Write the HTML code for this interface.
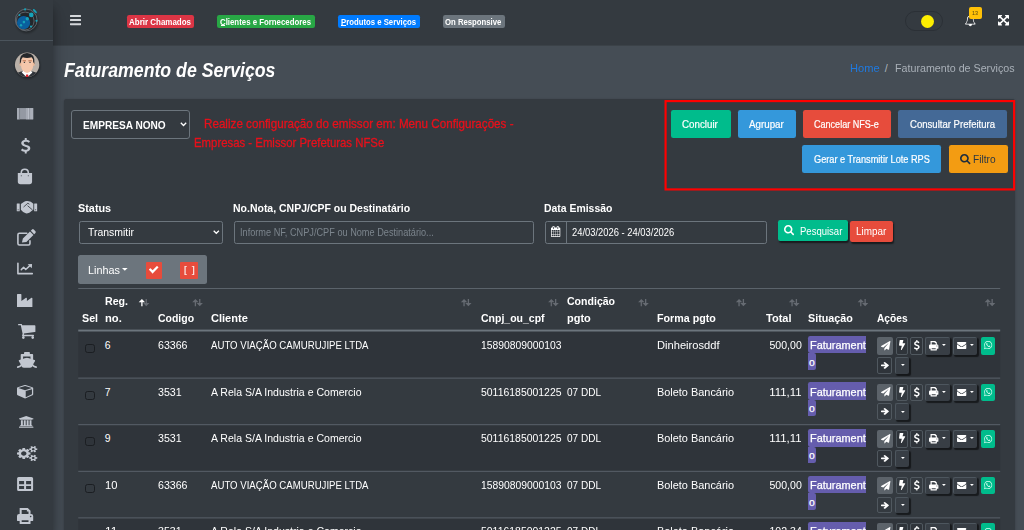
<!DOCTYPE html>
<html lang="pt-br"><head><meta charset="utf-8"><title>Faturamento de Serviços</title><style>
html,body{margin:0;padding:0}
body{width:1024px;height:530px;overflow:hidden;background:#454d55;font-family:"Liberation Sans",sans-serif;color:#fff;position:relative}
.t{position:absolute;white-space:pre;transform-origin:0 0}
.i{position:absolute;display:block;overflow:visible}
.b{position:absolute;box-sizing:border-box}
</style></head><body>
<span class="t" style="top:58.40px;font-size:19.6px;line-height:25.48px;left:63.52px;transform:scaleX(0.9032);font-weight:700;font-style:italic;">Faturamento de Serviços</span>
<span class="t" style="top:60.90px;font-size:10.8px;line-height:14.04px;left:850.21px;transform:scaleX(1.0266);color:#1f7ae0;">Home</span>
<span class="t" style="top:60.90px;font-size:10.8px;line-height:14.04px;left:884.86px;color:#adb5bd;">/</span>
<span class="t" style="top:60.90px;font-size:10.8px;line-height:14.04px;left:895.21px;transform:scaleX(0.9913);color:#a9b0b8;">Faturamento de Serviços</span>
<div class="b" style="left:53.00px;top:0.00px;width:971.00px;height:46.00px;background:#343a40;"></div>
<div class="b" style="left:53.00px;top:45.40px;width:971.00px;height:0.60px;background:#3b4248;"></div>
<svg class="i" style="left:70.00px;top:15.00px;" width="11.00" height="10.20" viewBox="0 0 1536 1280" preserveAspectRatio="none"><path fill="#d5d8db" d="M1536 1088V1216Q1536 1242 1517 1261Q1498 1280 1472 1280H64Q38 1280 19 1261Q0 1242 0 1216V1088Q0 1062 19 1043Q38 1024 64 1024H1472Q1498 1024 1517 1043Q1536 1062 1536 1088ZM1536 576V704Q1536 730 1517 749Q1498 768 1472 768H64Q38 768 19 749Q0 730 0 704V576Q0 550 19 531Q38 512 64 512H1472Q1498 512 1517 531Q1536 550 1536 576ZM1536 64V192Q1536 218 1517 237Q1498 256 1472 256H64Q38 256 19 237Q0 218 0 192V64Q0 38 19 19Q38 0 64 0H1472Q1498 0 1517 19Q1536 38 1536 64Z"/></svg>
<div class="b" style="left:126.75px;top:15.00px;width:67.50px;height:13.00px;background:#dc3545;border-radius:2.2px;"></div>
<span class="t" style="top:16.60px;font-size:8.3px;line-height:10.79px;left:129.34px;transform:scaleX(0.9610);font-weight:700;">Abrir Chamados</span>
<div class="b" style="left:217.00px;top:15.00px;width:97.50px;height:13.00px;background:#28a745;border-radius:2.2px;"></div>
<span class="t" style="top:16.60px;font-size:8.3px;line-height:10.79px;left:220.09px;transform:scaleX(0.9445);font-weight:700;">Clientes e Fornecedores</span>
<div class="b" style="left:337.50px;top:15.00px;width:82.00px;height:13.00px;background:#007bff;border-radius:2.2px;"></div>
<span class="t" style="top:16.60px;font-size:8.3px;line-height:10.79px;left:340.83px;transform:scaleX(0.9351);font-weight:700;">Produtos e Serviços</span>
<div class="b" style="left:443.00px;top:15.00px;width:62.00px;height:13.00px;background:#6c757d;border-radius:2.2px;"></div>
<span class="t" style="top:16.60px;font-size:8.3px;line-height:10.79px;left:445.33px;transform:scaleX(0.9325);font-weight:700;">On Responsive</span>
<div class="b" style="left:220.60px;top:25.40px;width:4.70px;height:0.70px;background:#fff;"></div>
<div class="b" style="left:341.30px;top:25.40px;width:4.60px;height:0.70px;background:#fff;"></div>
<div class="b" style="left:904.50px;top:10.60px;width:38.50px;height:20.00px;background:#343a40;border:1px solid #2b3036;border-radius:10px;"></div>
<div class="b" style="left:920.75px;top:14.70px;width:13.00px;height:13.00px;background:#fdee00;border-radius:7px;"></div>
<svg class="i" style="left:964.80px;top:15.00px;" width="10.60" height="11.20" viewBox="0 0 1664 1792" preserveAspectRatio="none"><path fill="#fff" d="M832 1680Q773 1680 730 1638Q688 1595 688 1536Q688 1520 672 1520Q656 1520 656 1536Q656 1609 708 1660Q759 1712 832 1712Q848 1712 848 1696Q848 1680 832 1680ZM182 1408H1482Q1216 1108 1216 576Q1216 525 1192 471Q1168 417 1123 368Q1078 319 1002 288Q925 256 832 256Q739 256 662 288Q586 319 541 368Q496 417 472 471Q448 525 448 576Q448 1108 182 1408ZM1664 1408Q1664 1460 1626 1498Q1588 1536 1536 1536H1088Q1088 1642 1013 1717Q938 1792 832 1792Q726 1792 651 1717Q576 1642 576 1536H128Q76 1536 38 1498Q0 1460 0 1408Q50 1366 91 1320Q132 1274 176 1200Q220 1127 250 1042Q281 957 300 836Q320 715 320 576Q320 424 437 294Q554 163 744 135Q736 116 736 96Q736 56 764 28Q792 0 832 0Q872 0 900 28Q928 56 928 96Q928 116 920 135Q1110 163 1227 294Q1344 424 1344 576Q1344 715 1364 836Q1383 957 1414 1042Q1444 1127 1488 1200Q1532 1274 1573 1320Q1614 1366 1664 1408Z"/></svg>
<div class="b" style="left:969.00px;top:6.90px;width:12.60px;height:12.50px;background:#ffc107;border-radius:2px;"></div>
<span class="t" style="top:10.20px;font-size:5.2px;line-height:6.76px;left:972.14px;transform:scaleX(1.0586);color:#5a4a10;">13</span>
<svg class="i" style="left:998.00px;top:15.00px;" width="11.00" height="10.40" viewBox="0 0 1536 1536" preserveAspectRatio="none"><path fill="#fff" d="M1283 413 928 768 1283 1123 1427 979Q1456 948 1497 965Q1536 982 1536 1024V1472Q1536 1498 1517 1517Q1498 1536 1472 1536H1024Q982 1536 965 1496Q948 1457 979 1427L1123 1283L768 928L413 1283L557 1427Q588 1457 571 1496Q554 1536 512 1536H64Q38 1536 19 1517Q0 1498 0 1472V1024Q0 982 40 965Q79 948 109 979L253 1123L608 768L253 413L109 557Q90 576 64 576Q52 576 40 571Q0 554 0 512V64Q0 38 19 19Q38 0 64 0H512Q554 0 571 40Q588 79 557 109L413 253L768 608L1123 253L979 109Q948 79 965 40Q982 0 1024 0H1472Q1498 0 1517 19Q1536 38 1536 64V512Q1536 554 1497 571Q1484 576 1472 576Q1446 576 1427 557Z"/></svg>
<div class="b" style="left:0.00px;top:0.00px;width:53.10px;height:530.00px;background:#343a40;box-shadow:0 10px 20px rgba(0,0,0,.25),0 7px 7px rgba(0,0,0,.22);"></div>
<div class="b" style="left:0.00px;top:40.00px;width:53.10px;height:1.00px;background:#4b545c;"></div>
<svg class="i" style="left:8px;top:0" width="48" height="46" viewBox="0 0 48 46">
<defs><filter id="bl" x="-30%" y="-30%" width="160%" height="160%"><feGaussianBlur stdDeviation="1.3"/></filter></defs><circle cx="18.8" cy="21.6" r="11.6" fill="rgba(0,0,0,.32)" filter="url(#bl)"/>
<circle cx="18.2" cy="20" r="10.9" fill="none" stroke="#8a9096" stroke-width=".55"/>
<circle cx="17.2" cy="21" r="8.9" fill="none" stroke="#8a9096" stroke-width=".55"/>
<circle cx="15.6" cy="22.7" r="6.6" fill="#0a5f9e"/>
<g fill="#17a2b8"><circle cx="23.3" cy="14.9" r="2.3"/><circle cx="19.3" cy="18.7" r="1.7"/><circle cx="15.9" cy="22.1" r="1.3"/><circle cx="13" cy="25.2" r="1.2"/>
<circle cx="17.1" cy="9.4" r="1.1"/><circle cx="11.5" cy="14.9" r="1"/><circle cx="28.5" cy="20.8" r="1.1"/><circle cx="23" cy="26.5" r="1.1"/>
<ellipse cx="26.9" cy="11.1" rx="2.6" ry="1" transform="rotate(45 26.9 11.1)"/></g></svg>
<svg class="i" style="left:8px;top:44px" width="48" height="46" viewBox="0 0 48 46">
<defs><clipPath id="av"><circle cx="19.1" cy="20.8" r="12.2"/></clipPath></defs>
<circle cx="19.5" cy="22" r="12.6" fill="rgba(0,0,0,.4)" filter="url(#bl)"/>
<g clip-path="url(#av)"><rect x="6" y="8" width="27" height="26" fill="#b9b0a8"/>
<path d="M6 34 L6 30 L13 27.5 L25 27.5 L32 30 L32 34Z" fill="#30343a"/>
<path d="M13.8 28.6 L19 33.5 L24.4 28.6 L22 26 L16 26Z" fill="#fff"/>
<path d="M18.2 30.5 h1.9 l.5 3 h-2.9Z" fill="#d9202a"/>
<path d="M13 15 Q13 11 19.1 11 Q25.2 11 25.2 15 L25.2 21 Q25.2 27.5 19.1 29 Q13 27.5 13 21Z" fill="#f4c7ab"/>
<rect x="11.6" y="18" width="1.8" height="4" rx=".9" fill="#eab898"/><rect x="24.8" y="18" width="1.8" height="4" rx=".9" fill="#eab898"/>
<path d="M11.8 20 Q10.6 9.4 19 9 Q27.6 9.4 26.4 20 L25.2 18 Q25.6 14.6 23.6 13.2 Q19 14.6 14.8 13.2 Q12.8 14.8 13 18Z" fill="#26282b"/>
<path d="M14.6 16.6 h3.4 v.7 h-3.4Z M20.4 16.6 h3.4 v.7 h-3.4Z" fill="#a0522d"/>
<circle cx="16.4" cy="18.4" r=".7" fill="#444"/><circle cx="22" cy="18.4" r=".7" fill="#444"/>
</g></svg>
<svg class="i" style="left:16.8px;top:107.8px" width="16.2" height="11.4" viewBox="0 0 330 230"><rect width="330" height="230" fill="#9499a3"/><rect x="0" width="42" height="230" fill="#a6abb5"/><rect x="42" width="20" height="230" fill="#7d828c"/><rect x="182" width="40" height="230" fill="#a6abb5"/><rect x="222" width="30" height="230" fill="#b9bec8"/><rect x="252" width="15" height="230" fill="#9297a1"/><rect x="267" width="63" height="230" fill="#abb0ba"/></svg>
<svg class="i" style="left:20.50px;top:137.70px;" width="9.30" height="15.60" viewBox="0 0 933 1792" preserveAspectRatio="none"><path fill="#c2c7d0" d="M933 1185Q933 1338 834 1448Q734 1559 575 1585V1760Q575 1774 566 1783Q557 1792 543 1792H408Q395 1792 386 1782Q376 1773 376 1760V1585Q310 1576 249 1554Q187 1532 147 1510Q107 1487 73 1462Q39 1436 27 1424Q14 1412 9 1406Q-8 1385 7 1365L110 1230Q117 1220 133 1218Q148 1216 157 1227Q157 1227 159 1229Q272 1328 402 1354Q439 1362 476 1362Q557 1362 619 1319Q680 1276 680 1197Q680 1169 665 1144Q650 1119 632 1102Q613 1085 573 1064Q533 1044 507 1032Q481 1021 427 1000Q388 984 366 975Q343 966 304 948Q265 931 242 918Q218 904 185 882Q152 860 132 840Q111 819 88 790Q65 762 53 732Q40 703 32 666Q23 629 23 588Q23 450 121 346Q219 242 376 212V32Q376 19 386 10Q395 0 408 0H543Q557 0 566 9Q575 18 575 32V208Q632 214 686 231Q739 248 773 264Q806 281 836 302Q866 323 875 331Q884 339 890 345Q907 363 895 383L814 529Q806 544 791 545Q777 548 764 538Q761 535 750 526Q738 517 711 500Q683 482 652 468Q621 453 578 442Q534 430 492 430Q397 430 337 473Q277 516 277 584Q277 610 286 632Q294 654 315 674Q336 693 355 706Q373 720 411 738Q448 755 471 764Q494 774 541 792Q594 812 622 824Q650 835 698 858Q746 882 774 901Q801 920 836 951Q870 982 889 1014Q907 1047 920 1091Q933 1135 933 1185Z"/></svg>
<svg class="i" style="left:12px;top:162px" width="30" height="56" viewBox="0 0 284 530">
<path fill="#c2c7d0" d="M55 105 H190 V185 Q190 210 165 210 H80 Q55 210 55 185Z"/>
<path fill="none" stroke="#c2c7d0" stroke-width="15" d="M88 125 V100 Q88 68 121 68 Q154 68 154 100 V125"/>
<circle cx="88" cy="130" r="5" fill="#343a40"/><circle cx="154" cy="130" r="5" fill="#343a40"/>
<rect x="45" y="392" width="28" height="75" rx="4" fill="#c2c7d0"/><rect x="210" y="392" width="28" height="75" rx="4" fill="#c2c7d0"/>
<path fill="#c2c7d0" d="M84 398 L112 378 Q128 366 148 370 L178 376 L202 396 V452 L188 462 Q160 492 130 486 Q104 478 84 452Z"/>
<path fill="none" stroke="#343a40" stroke-width="8" stroke-linecap="round" d="M112 424 L150 390 L162 398 M150 416 L192 452"/>
<circle cx="58" cy="452" r="5" fill="#343a40"/><circle cx="224" cy="452" r="5" fill="#343a40"/></svg>
<svg class="i" style="left:12px;top:224px" width="30" height="56" viewBox="0 0 284 530">
<path fill="none" stroke="#c2c7d0" stroke-width="15" stroke-linejoin="round" stroke-linecap="round" d="M140 88 H70 Q56 88 56 102 V184 Q56 198 70 198 H156 Q170 198 170 184 V158"/>
<path fill="#c2c7d0" d="M94 174 L103 138 L170 71 L203 104 L136 170Z M178 63 L190 51 Q198 45 206 52 L222 68 Q228 76 222 84 L210 96Z"/>
<path fill="none" stroke="#c2c7d0" stroke-width="15" stroke-linecap="round" stroke-linejoin="round" d="M56 372 V470 H192"/>
<path fill="none" stroke="#c2c7d0" stroke-width="14" stroke-linecap="round" stroke-linejoin="round" d="M88 432 L110 410 L130 430 L170 394"/>
<path fill="#c2c7d0" d="M148 380 L186 378 Q190 378 190 382 L187 418Z"/></svg>
<svg class="i" style="left:17.20px;top:294.10px;" width="15.40" height="13.10" viewBox="0 0 1792 1792" preserveAspectRatio="none"><path fill="#c2c7d0" d="M448 0Q474 0 493 19Q512 38 512 64V955L1048 526Q1065 512 1088 512Q1114 512 1133 531Q1152 550 1152 576V955L1688 526Q1705 512 1728 512Q1754 512 1773 531Q1792 550 1792 576V1728Q1792 1754 1773 1773Q1754 1792 1728 1792H64Q38 1792 19 1773Q0 1754 0 1728V64Q0 38 19 19Q38 0 64 0Z"/></svg>
<svg class="i" style="left:17.90px;top:324.00px;" width="17.40" height="14.90" viewBox="0 0 1664 1408" preserveAspectRatio="none"><path fill="#c2c7d0" d="M602 1190Q640 1228 640 1280Q640 1332 602 1370Q564 1408 512 1408Q460 1408 422 1370Q384 1332 384 1280Q384 1228 422 1190Q460 1152 512 1152Q564 1152 602 1190ZM1498 1190Q1536 1228 1536 1280Q1536 1332 1498 1370Q1460 1408 1408 1408Q1356 1408 1318 1370Q1280 1332 1280 1280Q1280 1228 1318 1190Q1356 1152 1408 1152Q1460 1152 1498 1190ZM1664 192V704Q1664 728 1648 746Q1631 765 1607 768L563 890Q576 950 576 960Q576 976 552 1024H1472Q1498 1024 1517 1043Q1536 1062 1536 1088Q1536 1114 1517 1133Q1498 1152 1472 1152H448Q422 1152 403 1133Q384 1114 384 1088Q384 1077 392 1056Q400 1036 408 1020Q416 1005 430 980Q443 956 445 951L268 128H64Q38 128 19 109Q0 90 0 64Q0 38 19 19Q38 0 64 0H320Q336 0 348 6Q361 13 368 22Q375 31 381 46Q387 62 389 72Q391 83 394 102Q398 121 399 128H1600Q1626 128 1645 147Q1664 166 1664 192Z"/></svg>
<svg class="i" style="left:12px;top:346px" width="30" height="28" viewBox="0 0 568 530">
<g fill="#c2c7d0"><rect x="228" y="112" width="110" height="55" rx="14"/>
<path fill-rule="evenodd" d="M180 150 H385 Q400 150 400 165 V300 H165 V165 Q165 150 180 150Z M210 200 V248 Q283 220 350 248 V200Z"/>
<path d="M128 282 Q125 270 140 265 L283 222 L426 265 Q440 270 437 282 L398 350 Q385 410 340 412 H226 Q180 410 168 350Z"/></g>
<g fill="none" stroke="#c2c7d0" stroke-width="30" stroke-linecap="round"><path d="M108 400 Q165 392 188 340"/><path d="M458 400 Q400 392 378 340"/></g></svg>
<svg class="i" style="left:16.80px;top:384.60px;" width="16.20" height="13.50" viewBox="0 0 1664 1664" preserveAspectRatio="none"><path fill="#c2c7d0" d="M896 1501 1536 1152V516L896 749ZM832 636 1530 382 832 128 134 382ZM1664 384V1152Q1664 1187 1646 1217Q1628 1247 1597 1264L893 1648Q865 1664 832 1664Q799 1664 771 1648L67 1264Q36 1247 18 1217Q0 1187 0 1152V384Q0 344 23 311Q46 278 84 264L788 8Q810 0 832 0Q854 0 876 8L1580 264Q1618 278 1641 311Q1664 344 1664 384Z"/></svg>
<svg class="i" style="left:18.60px;top:416.30px;" width="14.40" height="11.80" viewBox="0 0 1920 1792" preserveAspectRatio="none"><path fill="#c2c7d0" d="M960 0 1920 384V512H1792Q1792 538 1772 557Q1751 576 1723 576H197Q169 576 148 557Q128 538 128 512H0V384ZM256 640H512V1408H640V640H896V1408H1024V640H1280V1408H1408V640H1664V1408H1723Q1751 1408 1772 1427Q1792 1446 1792 1472V1536H128V1472Q128 1446 148 1427Q169 1408 197 1408H256ZM1851 1600Q1879 1600 1900 1619Q1920 1638 1920 1664V1792H0V1664Q0 1638 20 1619Q41 1600 69 1600Z"/></svg>
<svg class="i" style="left:16.80px;top:445.70px;" width="20.30" height="15.10" viewBox="0 0 1920 1761" preserveAspectRatio="none"><path fill="#c2c7d0" d="M821 1061Q896 986 896 880Q896 774 821 699Q746 624 640 624Q534 624 459 699Q384 774 384 880Q384 986 459 1061Q534 1136 640 1136Q746 1136 821 1061ZM1664 1392Q1664 1340 1626 1302Q1588 1264 1536 1264Q1484 1264 1446 1302Q1408 1340 1408 1392Q1408 1445 1446 1482Q1483 1520 1536 1520Q1589 1520 1626 1482Q1664 1445 1664 1392ZM1664 368Q1664 316 1626 278Q1588 240 1536 240Q1484 240 1446 278Q1408 316 1408 368Q1408 421 1446 458Q1483 496 1536 496Q1589 496 1626 458Q1664 421 1664 368ZM1280 789V974Q1280 984 1273 994Q1266 1003 1257 1004L1102 1028Q1091 1063 1070 1104Q1104 1152 1160 1219Q1167 1230 1167 1239Q1167 1251 1160 1258Q1137 1288 1078 1348Q1018 1407 999 1407Q988 1407 978 1400L863 1310Q826 1329 786 1341Q775 1449 763 1496Q756 1520 733 1520H547Q536 1520 527 1512Q518 1505 517 1495L494 1342Q460 1332 419 1311L301 1400Q294 1407 281 1407Q270 1407 260 1399Q116 1266 116 1239Q116 1230 123 1220Q133 1206 164 1167Q195 1128 211 1106Q188 1062 176 1024L24 1000Q14 999 7 990Q0 982 0 971V786Q0 776 7 766Q14 757 23 756L178 732Q189 697 210 656Q176 608 120 541Q113 530 113 521Q113 509 120 501Q142 471 202 412Q262 353 281 353Q292 353 302 360L417 450Q451 432 494 418Q505 310 517 264Q524 240 547 240H733Q744 240 753 248Q762 255 763 265L786 418Q820 428 861 449L979 360Q987 353 999 353Q1010 353 1020 361Q1164 494 1164 521Q1164 529 1157 540Q1145 556 1115 594Q1085 632 1070 654Q1093 702 1104 736L1256 759Q1266 761 1273 770Q1280 778 1280 789ZM1920 1322V1462Q1920 1478 1771 1493Q1759 1520 1741 1545Q1792 1658 1792 1683Q1792 1687 1788 1690Q1666 1761 1664 1761Q1656 1761 1618 1714Q1580 1667 1566 1646Q1546 1648 1536 1648Q1526 1648 1506 1646Q1492 1667 1454 1714Q1416 1761 1408 1761Q1406 1761 1284 1690Q1280 1687 1280 1683Q1280 1658 1331 1545Q1313 1520 1301 1493Q1152 1478 1152 1462V1322Q1152 1306 1301 1291Q1314 1262 1331 1239Q1280 1126 1280 1101Q1280 1097 1284 1094Q1288 1092 1319 1074Q1350 1056 1378 1040Q1406 1024 1408 1024Q1416 1024 1454 1070Q1492 1117 1506 1138Q1526 1136 1536 1136Q1546 1136 1566 1138Q1617 1067 1658 1026L1664 1024Q1668 1024 1788 1094Q1792 1097 1792 1101Q1792 1126 1741 1239Q1758 1262 1771 1291Q1920 1306 1920 1322ZM1920 298V438Q1920 454 1771 469Q1759 496 1741 521Q1792 634 1792 659Q1792 663 1788 666Q1666 737 1664 737Q1656 737 1618 690Q1580 643 1566 622Q1546 624 1536 624Q1526 624 1506 622Q1492 643 1454 690Q1416 737 1408 737Q1406 737 1284 666Q1280 663 1280 659Q1280 634 1331 521Q1313 496 1301 469Q1152 454 1152 438V298Q1152 282 1301 267Q1314 238 1331 215Q1280 102 1280 77Q1280 73 1284 70Q1288 68 1319 50Q1350 32 1378 16Q1406 0 1408 0Q1416 0 1454 46Q1492 93 1506 114Q1526 112 1536 112Q1546 112 1566 114Q1617 43 1658 2L1664 0Q1668 0 1788 70Q1792 73 1792 77Q1792 102 1741 215Q1758 238 1771 267Q1920 282 1920 298Z"/></svg>
<svg class="i" style="left:16.8px;top:477px" width="16.2" height="14" viewBox="0 0 512 448">
<path fill="#c2c7d0" fill-rule="evenodd" d="M48 0 H464 Q512 0 512 48 V400 Q512 448 464 448 H48 Q0 448 0 400 V48 Q0 0 48 0Z M64 130 V230 H224 V130Z M288 130 V230 H448 V130Z M64 290 V384 H224 V290Z M288 290 V384 H448 V290Z"/></svg>
<svg class="i" style="left:16.80px;top:507.90px" width="16.20" height="15.90" viewBox="0 0 512 512" preserveAspectRatio="none"><path fill="#c2c7d0" fill-rule="evenodd" d="M84 0 H340 L428 86 V192 H364 V110 H312 V64 H148 V192 H84Z M64 192 H448 Q512 192 512 256 V400 Q512 416 496 416 H428 V340 H84 V416 H16 Q0 416 0 400 V256 Q0 192 64 192Z M432 248 a24 24 0 1 0 .1 0Z M84 340 H428 V496 Q428 512 412 512 H100 Q84 512 84 496Z M148 396 V452 H364 V396Z"/></svg>
<div class="b" style="left:64.00px;top:99.00px;width:951.00px;height:461.00px;background:#343a40;border-radius:3px;box-shadow:0 0 1px rgba(0,0,0,.13),0 1px 3px rgba(0,0,0,.2);"></div>
<div class="b" style="left:71.25px;top:110.25px;width:118.75px;height:28.25px;background:#343a40;border:1px solid #6c757d;border-radius:3px;"></div>
<span class="t" style="top:118.10px;font-size:11.8px;line-height:15.34px;left:83.16px;transform:scaleX(0.8561);font-weight:700;">EMPRESA NONO</span>
<svg class="i" style="left:180.2px;top:122.2px" width="7" height="4.6" viewBox="0 0 7 4.6"><path d="M.8 .8 L3.5 3.5 L6.2 .8" fill="none" stroke="#fff" stroke-width="1.3"/></svg>
<span class="t" style="top:116.30px;font-size:12.4px;line-height:16.12px;left:203.88px;transform:scaleX(0.9403);color:#e8101b;-webkit-text-stroke:.3px #e8101b;">Realize configuração do emissor em: Menu Configurações -</span>
<span class="t" style="top:134.50px;font-size:12.4px;line-height:16.12px;left:193.88px;transform:scaleX(0.9179);color:#e8101b;-webkit-text-stroke:.3px #e8101b;">Empresas - Emissor Prefeturas NFSe</span>
<svg class="i" style="left:0;top:0" width="1024" height="200" viewBox="0 0 1024 200"><rect x="665.58" y="101.08" width="348.54" height="88.34" fill="none" stroke="#ff0000" stroke-width="2.16"/></svg>
<div class="b" style="left:670.50px;top:110.25px;width:60.00px;height:27.75px;background:#00bc8c;border-radius:2.3px;"></div>
<span class="t" style="top:117.60px;font-size:10.6px;line-height:13.78px;left:682.47px;transform:scaleX(0.9215);-webkit-text-stroke:.2px #fff;">Concluir</span>
<div class="b" style="left:737.50px;top:110.25px;width:58.50px;height:27.75px;background:#3498db;border-radius:2.3px;"></div>
<span class="t" style="top:117.60px;font-size:10.6px;line-height:13.78px;left:749.22px;transform:scaleX(0.9233);-webkit-text-stroke:.2px #fff;">Agrupar</span>
<div class="b" style="left:803.00px;top:110.25px;width:88.00px;height:27.75px;background:#e74c3c;border-radius:2.3px;"></div>
<span class="t" style="top:117.60px;font-size:10.6px;line-height:13.78px;left:814.22px;transform:scaleX(0.8533);-webkit-text-stroke:.2px #fff;">Cancelar NFS-e</span>
<div class="b" style="left:898.00px;top:110.25px;width:109.25px;height:27.75px;background:#446996;border-radius:2.3px;"></div>
<span class="t" style="top:117.60px;font-size:10.6px;line-height:13.78px;left:910.22px;transform:scaleX(0.9028);-webkit-text-stroke:.2px #fff;">Consultar Prefeitura</span>
<div class="b" style="left:802.30px;top:145.20px;width:138.70px;height:28.20px;background:#3498db;border-radius:2.3px;"></div>
<span class="t" style="top:152.80px;font-size:10.6px;line-height:13.78px;left:813.97px;transform:scaleX(0.8669);-webkit-text-stroke:.2px #fff;">Gerar e Transmitir Lote RPS</span>
<div class="b" style="left:948.50px;top:145.20px;width:59.30px;height:28.20px;background:#f39c12;border-radius:2.3px;"></div>
<span class="t" style="top:152.80px;font-size:10.6px;line-height:13.78px;left:972.87px;transform:scaleX(0.9581);color:#2a3744;">Filtro</span>
<svg class="i" style="left:960.20px;top:154.10px;" width="10.40" height="10.20" viewBox="0 0 1664 1664" preserveAspectRatio="none"><path fill="#1f2d3d" d="M1020 1020Q1152 889 1152 704Q1152 519 1020 388Q889 256 704 256Q519 256 388 388Q256 519 256 704Q256 889 388 1020Q519 1152 704 1152Q889 1152 1020 1020ZM1664 1536Q1664 1588 1626 1626Q1588 1664 1536 1664Q1482 1664 1446 1626L1103 1284Q924 1408 704 1408Q561 1408 430 1352Q300 1297 206 1202Q111 1108 56 978Q0 847 0 704Q0 561 56 430Q111 300 206 206Q300 111 430 56Q561 0 704 0Q847 0 978 56Q1108 111 1202 206Q1297 300 1352 430Q1408 561 1408 704Q1408 924 1284 1103L1627 1446Q1664 1483 1664 1536Z"/></svg>
<span class="t" style="top:200.20px;font-size:11.6px;line-height:15.08px;left:77.92px;transform:scaleX(0.9357);font-weight:700;">Status</span>
<span class="t" style="top:200.20px;font-size:11.6px;line-height:15.08px;left:233.42px;transform:scaleX(0.9047);font-weight:700;">No.Nota, CNPJ/CPF ou Destinatário</span>
<span class="t" style="top:200.20px;font-size:11.6px;line-height:15.08px;left:544.32px;transform:scaleX(0.8989);font-weight:700;">Data Emissão</span>
<div class="b" style="left:78.50px;top:221.25px;width:144.25px;height:22.50px;background:#343a40;border:1px solid #6c757d;border-radius:2.3px;"></div>
<span class="t" style="top:226.30px;font-size:10.3px;line-height:13.39px;left:87.73px;transform:scaleX(1.0141);">Transmitir</span>
<svg class="i" style="left:213.2px;top:230.3px" width="6.6" height="4.4" viewBox="0 0 6.6 4.4"><path d="M.7 .7 L3.3 3.3 L5.9 .7" fill="none" stroke="#fff" stroke-width="1.25"/></svg>
<div class="b" style="left:234.00px;top:221.25px;width:299.75px;height:22.50px;background:#343a40;border:1px solid #6c757d;border-radius:2.3px;"></div>
<span class="t" style="top:226.30px;font-size:10.3px;line-height:13.39px;left:239.74px;transform:scaleX(0.8911);color:#7b848c;">Informe NF, CNPJ/CPF ou Nome Destinatário...</span>
<div class="b" style="left:544.75px;top:221.25px;width:221.75px;height:22.50px;background:#343a40;border:1px solid #6c757d;border-radius:2.3px;"></div>
<div class="b" style="left:566.00px;top:221.25px;width:1.00px;height:22.50px;background:#6c757d;"></div>
<svg class="i" style="left:551.20px;top:226.30px;" width="9.30" height="11.00" viewBox="0 0 1664 1792" preserveAspectRatio="none"><path fill="#fff" d="M128 1664H416V1376H128ZM480 1664H800V1376H480ZM128 1312H416V992H128ZM480 1312H800V992H480ZM128 928H416V640H128ZM864 1664H1184V1376H864ZM480 928H800V640H480ZM1248 1664H1536V1376H1248ZM864 1312H1184V992H864ZM512 448V160Q512 147 502 138Q493 128 480 128H416Q403 128 394 138Q384 147 384 160V448Q384 461 394 470Q403 480 416 480H480Q493 480 502 470Q512 461 512 448ZM1248 1312H1536V992H1248ZM864 928H1184V640H864ZM1248 928H1536V640H1248ZM1280 448V160Q1280 147 1270 138Q1261 128 1248 128H1184Q1171 128 1162 138Q1152 147 1152 160V448Q1152 461 1162 470Q1171 480 1184 480H1248Q1261 480 1270 470Q1280 461 1280 448ZM1664 384V1664Q1664 1716 1626 1754Q1588 1792 1536 1792H128Q76 1792 38 1754Q0 1716 0 1664V384Q0 332 38 294Q76 256 128 256H256V160Q256 94 303 47Q350 0 416 0H480Q546 0 593 47Q640 94 640 160V256H1024V160Q1024 94 1071 47Q1118 0 1184 0H1248Q1314 0 1361 47Q1408 94 1408 160V256H1536Q1588 256 1626 294Q1664 332 1664 384Z"/></svg>
<span class="t" style="top:226.30px;font-size:10.3px;line-height:13.39px;left:571.74px;transform:scaleX(0.9113);">24/03/2026 - 24/03/2026</span>
<div class="b" style="left:778.00px;top:219.50px;width:70.00px;height:21.75px;background:#00bc8c;border-radius:2.2px;box-shadow:1px 1.5px 1.5px rgba(0,0,0,.55);"></div>
<svg class="i" style="left:784.30px;top:224.60px;" width="10.00" height="10.20" viewBox="0 0 1664 1664" preserveAspectRatio="none"><path fill="#fff" d="M1020 1020Q1152 889 1152 704Q1152 519 1020 388Q889 256 704 256Q519 256 388 388Q256 519 256 704Q256 889 388 1020Q519 1152 704 1152Q889 1152 1020 1020ZM1664 1536Q1664 1588 1626 1626Q1588 1664 1536 1664Q1482 1664 1446 1626L1103 1284Q924 1408 704 1408Q561 1408 430 1352Q300 1297 206 1202Q111 1108 56 978Q0 847 0 704Q0 561 56 430Q111 300 206 206Q300 111 430 56Q561 0 704 0Q847 0 978 56Q1108 111 1202 206Q1297 300 1352 430Q1408 561 1408 704Q1408 924 1284 1103L1627 1446Q1664 1483 1664 1536Z"/></svg>
<span class="t" style="top:224.60px;font-size:10.6px;line-height:13.78px;left:799.97px;transform:scaleX(0.8981);">Pesquisar</span>
<div class="b" style="left:850.00px;top:220.50px;width:43.00px;height:21.50px;background:#e74c3c;border-radius:2.2px;box-shadow:1px 1.5px 1.5px rgba(0,0,0,.55);"></div>
<span class="t" style="top:225.00px;font-size:10.6px;line-height:13.78px;left:856.22px;transform:scaleX(0.9358);">Limpar</span>
<div class="b" style="left:78.25px;top:255.25px;width:129.00px;height:28.75px;background:#6c757d;border-radius:2.5px;"></div>
<span class="t" style="top:263.10px;font-size:11.4px;line-height:14.82px;left:87.68px;transform:scaleX(0.9497);">Linhas</span>
<svg class="i" style="left:122.2px;top:268.2px" width="5.6" height="2.9" viewBox="0 0 10 5"><path d="M0 0 H10 L5 5Z" fill="#fff"/></svg>
<div class="b" style="left:146.00px;top:262.00px;width:16.00px;height:16.50px;background:#e74c3c;border-radius:1px;"></div>
<svg class="i" style="left:149.20px;top:266.30px;" width="9.40" height="7.40" viewBox="0 0 1550 1188" preserveAspectRatio="none"><path fill="#fff" d="M1522 300 798 1024 662 1160Q634 1188 594 1188Q554 1188 526 1160L390 1024L28 662Q0 634 0 594Q0 554 28 526L164 390Q192 362 232 362Q272 362 300 390L594 685L1250 28Q1278 0 1318 0Q1358 0 1386 28L1522 164Q1550 192 1550 232Q1550 272 1522 300Z"/></svg>
<div class="b" style="left:179.75px;top:262.00px;width:18.50px;height:16.50px;background:#e74c3c;border-radius:1px;"></div>
<span class="t" style="top:266.20px;font-size:8.2px;line-height:10.66px;left:183.79px;transform:scaleX(1.0803);font-weight:700;color:#fbe6e3;">[  ]</span>
<svg class="i" style="left:0;top:0" width="1024" height="530" viewBox="0 0 1024 530">
<rect x="78.25" y="331.50" width="921.95" height="46.60" fill="#2f343a"/>
<rect x="78.25" y="424.70" width="921.95" height="46.60" fill="#2f343a"/>
<rect x="78.25" y="517.90" width="921.95" height="46.60" fill="#2f343a"/>
<rect x="78.25" y="288" width="921.95" height="1" fill="#5b636b"/>
<rect x="78.25" y="329.6" width="921.95" height="1.9" fill="#6c757d"/>
<rect x="78.25" y="377.60" width="921.95" height="1" fill="#5b636b"/>
<rect x="78.25" y="424.20" width="921.95" height="1" fill="#5b636b"/>
<rect x="78.25" y="470.80" width="921.95" height="1" fill="#5b636b"/>
<rect x="78.25" y="517.40" width="921.95" height="1" fill="#5b636b"/>
<g transform="translate(138.6,299)"><path fill="#666b72" d="M7 0 H8.3 V4 H10.8 L7.65 7.3 L4.5 4 H7Z"/><path fill="#fff" d="M2.65 7.2 H3.95 V3.3 H6.5 L3.3 0 L.1 3.3 H2.65Z"/></g>
<g transform="translate(192.1,299)"><path fill="#666b72" d="M7 0 H8.3 V4 H10.8 L7.65 7.3 L4.5 4 H7Z"/><path fill="#666b72" d="M2.65 7.2 H3.95 V3.3 H6.5 L3.3 0 L.1 3.3 H2.65Z"/></g>
<g transform="translate(460.75,299)"><path fill="#666b72" d="M7 0 H8.3 V4 H10.8 L7.65 7.3 L4.5 4 H7Z"/><path fill="#666b72" d="M2.65 7.2 H3.95 V3.3 H6.5 L3.3 0 L.1 3.3 H2.65Z"/></g>
<g transform="translate(548,299)"><path fill="#666b72" d="M7 0 H8.3 V4 H10.8 L7.65 7.3 L4.5 4 H7Z"/><path fill="#666b72" d="M2.65 7.2 H3.95 V3.3 H6.5 L3.3 0 L.1 3.3 H2.65Z"/></g>
<g transform="translate(638,299)"><path fill="#666b72" d="M7 0 H8.3 V4 H10.8 L7.65 7.3 L4.5 4 H7Z"/><path fill="#666b72" d="M2.65 7.2 H3.95 V3.3 H6.5 L3.3 0 L.1 3.3 H2.65Z"/></g>
<g transform="translate(735.75,299)"><path fill="#666b72" d="M7 0 H8.3 V4 H10.8 L7.65 7.3 L4.5 4 H7Z"/><path fill="#666b72" d="M2.65 7.2 H3.95 V3.3 H6.5 L3.3 0 L.1 3.3 H2.65Z"/></g>
<g transform="translate(788.75,299)"><path fill="#666b72" d="M7 0 H8.3 V4 H10.8 L7.65 7.3 L4.5 4 H7Z"/><path fill="#666b72" d="M2.65 7.2 H3.95 V3.3 H6.5 L3.3 0 L.1 3.3 H2.65Z"/></g>
<g transform="translate(857.5,299)"><path fill="#666b72" d="M7 0 H8.3 V4 H10.8 L7.65 7.3 L4.5 4 H7Z"/><path fill="#666b72" d="M2.65 7.2 H3.95 V3.3 H6.5 L3.3 0 L.1 3.3 H2.65Z"/></g>
<g transform="translate(984.5,299)"><path fill="#666b72" d="M7 0 H8.3 V4 H10.8 L7.65 7.3 L4.5 4 H7Z"/><path fill="#666b72" d="M2.65 7.2 H3.95 V3.3 H6.5 L3.3 0 L.1 3.3 H2.65Z"/></g>
</svg>
<span class="t" style="top:312.30px;font-size:10.6px;line-height:13.78px;left:81.72px;transform:scaleX(1.0097);font-weight:700;">Sel</span>
<span class="t" style="top:295.30px;font-size:10.6px;line-height:13.78px;left:104.72px;transform:scaleX(1.0040);font-weight:700;">Reg.</span>
<span class="t" style="top:312.30px;font-size:10.6px;line-height:13.78px;left:104.72px;transform:scaleX(1.0579);font-weight:700;">no.</span>
<span class="t" style="top:312.30px;font-size:10.6px;line-height:13.78px;left:158.47px;transform:scaleX(0.9884);font-weight:700;">Codigo</span>
<span class="t" style="top:312.30px;font-size:10.6px;line-height:13.78px;left:211.47px;transform:scaleX(1.0419);font-weight:700;">Cliente</span>
<span class="t" style="top:312.30px;font-size:10.6px;line-height:13.78px;left:480.72px;transform:scaleX(0.9907);font-weight:700;">Cnpj_ou_cpf</span>
<span class="t" style="top:295.30px;font-size:10.6px;line-height:13.78px;left:567.47px;transform:scaleX(0.9957);font-weight:700;">Condição</span>
<span class="t" style="top:312.30px;font-size:10.6px;line-height:13.78px;left:567.47px;transform:scaleX(1.0373);font-weight:700;">pgto</span>
<span class="t" style="top:312.30px;font-size:10.6px;line-height:13.78px;left:657.47px;transform:scaleX(1.0093);font-weight:700;">Forma pgto</span>
<span class="t" style="top:312.30px;font-size:10.6px;line-height:13.78px;left:765.72px;transform:scaleX(1.0419);font-weight:700;">Total</span>
<span class="t" style="top:312.30px;font-size:10.6px;line-height:13.78px;left:808.22px;transform:scaleX(1.0148);font-weight:700;">Situação</span>
<span class="t" style="top:312.30px;font-size:10.6px;line-height:13.78px;left:876.97px;transform:scaleX(0.9611);font-weight:700;">Ações</span>
<div class="b" style="left:85.25px;top:344.00px;width:9.25px;height:9.00px;background:#2f343a;border:1.6px solid #1b1e22;border-radius:2.6px;"></div>
<span class="t" style="top:339.00px;font-size:10.4px;line-height:13.52px;left:104.73px;">6</span>
<span class="t" style="top:339.00px;font-size:10.4px;line-height:13.52px;left:158.48px;transform:scaleX(1.0219);">63366</span>
<span class="t" style="top:339.00px;font-size:10.4px;line-height:13.52px;left:211.48px;transform:scaleX(0.9270);">AUTO VIAÇÃO CAMURUJIPE LTDA</span>
<span class="t" style="top:339.00px;font-size:10.4px;line-height:13.52px;left:480.73px;transform:scaleX(0.9955);">15890809000103</span>
<span class="t" style="top:339.00px;font-size:10.4px;line-height:13.52px;left:657.48px;transform:scaleX(1.0719);">Dinheirosddf</span>
<span class="t" style="top:339.00px;font-size:10.4px;line-height:13.52px;right:222.23px;transform-origin:100% 0;transform:scaleX(1.0160);">500,00</span>
<div class="b" style="left:808.3px;top:335.80px;width:57.3px;height:17.5px;background:#655dad;border-radius:2.2px 0 0 2.2px"></div>
<div class="b" style="left:808.3px;top:353.30px;width:7.5px;height:16.5px;background:#655dad;border-radius:0 2.2px 2.2px 0"></div>
<span class="t" style="top:339.00px;font-size:10.4px;line-height:13.52px;left:809.98px;transform:scaleX(1.0489);-webkit-text-stroke:.25px #fff;">Faturament</span>
<span class="t" style="top:355.80px;font-size:10.4px;line-height:13.52px;left:808.88px;-webkit-text-stroke:.25px #fff;">o</span>
<div class="b" style="left:877.00px;top:337.00px;width:16.00px;height:17.50px;background:#5c636a;border-radius:2px;"></div>
<svg class="i" style="left:881.40px;top:340.70px;" width="9.40" height="9.40" viewBox="0 0 1792 1792" preserveAspectRatio="none"><path fill="#fff" d="M1764 11Q1797 35 1791 75L1535 1611Q1530 1640 1503 1656Q1489 1664 1472 1664Q1461 1664 1448 1659L995 1474L753 1769Q735 1792 704 1792Q691 1792 682 1788Q663 1781 652 1764Q640 1748 640 1728V1379L1504 320L435 1245L40 1083Q3 1069 0 1028Q-2 988 32 969L1696 9Q1711 0 1728 0Q1748 0 1764 11Z"/></svg>
<div class="b" style="left:895.75px;top:337.00px;width:12.50px;height:17.50px;border:1px solid #50585f;border-radius:2px;"></div>
<svg class="i" style="left:899.2px;top:340.10px" width="6.3" height="10" viewBox="0 0 320 512"><path fill="#fff" d="M296 160H180.600l42.600-129.800C227.200 15 215.700 0 200 0H56C44 0 33.800 8.900 32.200 20.800l-32 240C-1.700 275.200 9.500 288 24 288h118.700L96.600 482.500c-3.600 15.200 8 29.500 23.300 29.500 8.400 0 16.400-4.400 20.800-12l176-304c9.300-15.900-2.200-36-20.700-36z"/></svg>
<div class="b" style="left:910.00px;top:337.00px;width:13.00px;height:17.50px;border:1px solid #50585f;border-radius:2px;"></div>
<svg class="i" style="left:913.90px;top:339.90px;" width="5.60" height="10.60" viewBox="0 0 933 1792" preserveAspectRatio="none"><path fill="#fff" d="M933 1185Q933 1338 834 1448Q734 1559 575 1585V1760Q575 1774 566 1783Q557 1792 543 1792H408Q395 1792 386 1782Q376 1773 376 1760V1585Q310 1576 249 1554Q187 1532 147 1510Q107 1487 73 1462Q39 1436 27 1424Q14 1412 9 1406Q-8 1385 7 1365L110 1230Q117 1220 133 1218Q148 1216 157 1227Q157 1227 159 1229Q272 1328 402 1354Q439 1362 476 1362Q557 1362 619 1319Q680 1276 680 1197Q680 1169 665 1144Q650 1119 632 1102Q613 1085 573 1064Q533 1044 507 1032Q481 1021 427 1000Q388 984 366 975Q343 966 304 948Q265 931 242 918Q218 904 185 882Q152 860 132 840Q111 819 88 790Q65 762 53 732Q40 703 32 666Q23 629 23 588Q23 450 121 346Q219 242 376 212V32Q376 19 386 10Q395 0 408 0H543Q557 0 566 9Q575 18 575 32V208Q632 214 686 231Q739 248 773 264Q806 281 836 302Q866 323 875 331Q884 339 890 345Q907 363 895 383L814 529Q806 544 791 545Q777 548 764 538Q761 535 750 526Q738 517 711 500Q683 482 652 468Q621 453 578 442Q534 430 492 430Q397 430 337 473Q277 516 277 584Q277 610 286 632Q294 654 315 674Q336 693 355 706Q373 720 411 738Q448 755 471 764Q494 774 541 792Q594 812 622 824Q650 835 698 858Q746 882 774 901Q801 920 836 951Q870 982 889 1014Q907 1047 920 1091Q933 1135 933 1185Z"/></svg>
<div class="b" style="left:924.75px;top:337.00px;width:25.00px;height:17.50px;background:#383e45;border-radius:2px;border-top:1px solid #4d565e;border-left:1px solid #4d565e;box-shadow:1.5px 1.5px 1px rgba(0,0,0,.55);"></div>
<svg class="i" style="left:928.90px;top:340.70px" width="9.40" height="9.40" viewBox="0 0 512 512" preserveAspectRatio="none"><path fill="#fff" fill-rule="evenodd" d="M84 0 H340 L428 86 V192 H364 V110 H312 V64 H148 V192 H84Z M64 192 H448 Q512 192 512 256 V400 Q512 416 496 416 H428 V340 H84 V416 H16 Q0 416 0 400 V256 Q0 192 64 192Z M432 248 a24 24 0 1 0 .1 0Z M84 340 H428 V496 Q428 512 412 512 H100 Q84 512 84 496Z M148 396 V452 H364 V396Z"/></svg>
<svg class="i" style="left:942.25px;top:344.10px" width="3.8" height="2" viewBox="0 0 10 5"><path d="M0 0 H10 L5 5Z" fill="#fff"/></svg>
<div class="b" style="left:953.00px;top:337.00px;width:24.00px;height:17.50px;background:#383e45;border-radius:2px;border-top:1px solid #4d565e;border-left:1px solid #4d565e;box-shadow:1.5px 1.5px 1px rgba(0,0,0,.55);"></div>
<svg class="i" style="left:956.75px;top:342.00px;" width="9.30" height="7.00" viewBox="0 0 1792 1408" preserveAspectRatio="none"><path fill="#fff" d="M1792 454V1248Q1792 1314 1745 1361Q1698 1408 1632 1408H160Q94 1408 47 1361Q0 1314 0 1248V454Q44 503 101 541Q463 787 598 886Q655 928 690 952Q726 975 785 1000Q844 1024 895 1024H896H897Q948 1024 1007 1000Q1066 975 1102 952Q1137 928 1194 886Q1364 763 1692 541Q1749 502 1792 454ZM1792 160Q1792 239 1743 311Q1694 383 1621 434Q1245 695 1153 759Q1143 766 1110 790Q1078 813 1056 828Q1035 842 1004 860Q974 878 947 887Q920 896 897 896H896H895Q872 896 845 887Q818 878 788 860Q757 842 736 828Q714 813 682 790Q649 766 639 759Q548 695 377 576Q206 458 172 434Q110 392 55 318Q0 245 0 182Q0 104 42 52Q83 0 160 0H1632Q1697 0 1744 47Q1792 94 1792 160Z"/></svg>
<svg class="i" style="left:969.75px;top:344.10px" width="3.8" height="2" viewBox="0 0 10 5"><path d="M0 0 H10 L5 5Z" fill="#fff"/></svg>
<div class="b" style="left:980.75px;top:337.00px;width:14.25px;height:17.50px;background:#00bc8c;border-radius:2px;"></div>
<svg class="i" style="left:983.90px;top:341.40px;" width="8.20" height="8.20" viewBox="0 0 1536 1548" preserveAspectRatio="none"><path fill="#d9fff3" d="M1172 949Q1174 954 1174 964Q1174 997 1157 1040Q1141 1079 1086 1106Q1031 1132 984 1132Q927 1132 794 1070Q696 1025 624 952Q552 879 476 767Q404 660 405 573V565Q408 474 479 407Q503 385 531 385Q537 385 549 386Q561 388 568 388Q587 388 594 394Q602 401 610 422Q618 442 643 510Q668 578 668 585Q668 606 634 642Q599 679 599 689Q599 696 604 704Q638 777 706 841Q762 894 857 942Q869 949 879 949Q894 949 933 900Q972 852 985 852Q998 852 1082 896Q1167 940 1172 949ZM782 1382Q909 1382 1026 1332Q1142 1282 1226 1198Q1310 1114 1360 998Q1410 881 1410 754Q1410 627 1360 510Q1310 394 1226 310Q1142 226 1026 176Q909 126 782 126Q655 126 538 176Q422 226 338 310Q254 394 204 510Q154 627 154 754Q154 957 274 1122L195 1355L437 1278Q595 1382 782 1382ZM782 1508Q587 1508 417 1414L0 1548L136 1143Q28 965 28 754Q28 601 88 462Q148 322 249 221Q350 120 490 60Q629 0 782 0Q935 0 1074 60Q1214 120 1315 221Q1416 322 1476 462Q1536 601 1536 754Q1536 907 1476 1046Q1416 1186 1315 1287Q1214 1388 1074 1448Q935 1508 782 1508Z"/></svg>
<div class="b" style="left:877.00px;top:356.75px;width:15.00px;height:16.75px;border:1px solid #50585f;border-radius:2px;"></div>
<svg class="i" style="left:881.00px;top:361.75px;" width="7.90" height="6.80" viewBox="0 0 1472 1558" preserveAspectRatio="none"><path fill="#fff" d="M1472 779Q1472 833 1435 870L784 1521Q745 1558 693 1558Q642 1558 603 1521L528 1446Q490 1408 490 1355Q490 1302 528 1264L821 971H117Q65 971 32 934Q0 896 0 843V715Q0 662 32 624Q65 587 117 587H821L528 293Q490 257 490 203Q490 149 528 113L603 38Q641 0 693 0Q746 0 784 38L1435 689Q1472 724 1472 779Z"/></svg>
<div class="b" style="left:894.50px;top:356.75px;width:14.50px;height:16.75px;background:#383e45;border-radius:2px;border-top:1px solid #4d565e;border-left:1px solid #4d565e;box-shadow:1.5px 1.5px 1px rgba(0,0,0,.55);"></div>
<svg class="i" style="left:901px;top:363.90px" width="3.8" height="2" viewBox="0 0 10 5"><path d="M0 0 H10 L5 5Z" fill="#fff"/></svg>
<div class="b" style="left:85.25px;top:390.60px;width:9.25px;height:9.00px;background:#343a40;border:1.6px solid #1b1e22;border-radius:2.6px;"></div>
<span class="t" style="top:385.60px;font-size:10.4px;line-height:13.52px;left:104.73px;">7</span>
<span class="t" style="top:385.60px;font-size:10.4px;line-height:13.52px;left:158.48px;transform:scaleX(1.0266);">3531</span>
<span class="t" style="top:385.60px;font-size:10.4px;line-height:13.52px;left:211.48px;transform:scaleX(1.0142);">A Rela S/A Industria e Comercio</span>
<span class="t" style="top:385.60px;font-size:10.4px;line-height:13.52px;left:480.73px;transform:scaleX(1.0050);">50116185001225</span>
<span class="t" style="top:385.60px;font-size:10.4px;line-height:13.52px;left:567.48px;transform:scaleX(0.9661);">07 DDL</span>
<span class="t" style="top:385.60px;font-size:10.4px;line-height:13.52px;left:657.48px;transform:scaleX(1.0502);">Boleto Bancário</span>
<span class="t" style="top:385.60px;font-size:10.4px;line-height:13.52px;right:222.23px;transform-origin:100% 0;transform:scaleX(1.0957);">111,11</span>
<div class="b" style="left:808.3px;top:382.40px;width:57.3px;height:17.5px;background:#655dad;border-radius:2.2px 0 0 2.2px"></div>
<div class="b" style="left:808.3px;top:399.90px;width:7.5px;height:16.5px;background:#655dad;border-radius:0 2.2px 2.2px 0"></div>
<span class="t" style="top:385.60px;font-size:10.4px;line-height:13.52px;left:809.98px;transform:scaleX(1.0489);-webkit-text-stroke:.25px #fff;">Faturament</span>
<span class="t" style="top:402.40px;font-size:10.4px;line-height:13.52px;left:808.88px;-webkit-text-stroke:.25px #fff;">o</span>
<div class="b" style="left:877.00px;top:383.60px;width:16.00px;height:17.50px;background:#5c636a;border-radius:2px;"></div>
<svg class="i" style="left:881.40px;top:387.30px;" width="9.40" height="9.40" viewBox="0 0 1792 1792" preserveAspectRatio="none"><path fill="#fff" d="M1764 11Q1797 35 1791 75L1535 1611Q1530 1640 1503 1656Q1489 1664 1472 1664Q1461 1664 1448 1659L995 1474L753 1769Q735 1792 704 1792Q691 1792 682 1788Q663 1781 652 1764Q640 1748 640 1728V1379L1504 320L435 1245L40 1083Q3 1069 0 1028Q-2 988 32 969L1696 9Q1711 0 1728 0Q1748 0 1764 11Z"/></svg>
<div class="b" style="left:895.75px;top:383.60px;width:12.50px;height:17.50px;border:1px solid #50585f;border-radius:2px;"></div>
<svg class="i" style="left:899.2px;top:386.70px" width="6.3" height="10" viewBox="0 0 320 512"><path fill="#fff" d="M296 160H180.600l42.600-129.800C227.200 15 215.700 0 200 0H56C44 0 33.800 8.900 32.200 20.800l-32 240C-1.700 275.200 9.500 288 24 288h118.700L96.600 482.500c-3.600 15.200 8 29.500 23.300 29.500 8.400 0 16.400-4.400 20.800-12l176-304c9.300-15.900-2.200-36-20.700-36z"/></svg>
<div class="b" style="left:910.00px;top:383.60px;width:13.00px;height:17.50px;border:1px solid #50585f;border-radius:2px;"></div>
<svg class="i" style="left:913.90px;top:386.50px;" width="5.60" height="10.60" viewBox="0 0 933 1792" preserveAspectRatio="none"><path fill="#fff" d="M933 1185Q933 1338 834 1448Q734 1559 575 1585V1760Q575 1774 566 1783Q557 1792 543 1792H408Q395 1792 386 1782Q376 1773 376 1760V1585Q310 1576 249 1554Q187 1532 147 1510Q107 1487 73 1462Q39 1436 27 1424Q14 1412 9 1406Q-8 1385 7 1365L110 1230Q117 1220 133 1218Q148 1216 157 1227Q157 1227 159 1229Q272 1328 402 1354Q439 1362 476 1362Q557 1362 619 1319Q680 1276 680 1197Q680 1169 665 1144Q650 1119 632 1102Q613 1085 573 1064Q533 1044 507 1032Q481 1021 427 1000Q388 984 366 975Q343 966 304 948Q265 931 242 918Q218 904 185 882Q152 860 132 840Q111 819 88 790Q65 762 53 732Q40 703 32 666Q23 629 23 588Q23 450 121 346Q219 242 376 212V32Q376 19 386 10Q395 0 408 0H543Q557 0 566 9Q575 18 575 32V208Q632 214 686 231Q739 248 773 264Q806 281 836 302Q866 323 875 331Q884 339 890 345Q907 363 895 383L814 529Q806 544 791 545Q777 548 764 538Q761 535 750 526Q738 517 711 500Q683 482 652 468Q621 453 578 442Q534 430 492 430Q397 430 337 473Q277 516 277 584Q277 610 286 632Q294 654 315 674Q336 693 355 706Q373 720 411 738Q448 755 471 764Q494 774 541 792Q594 812 622 824Q650 835 698 858Q746 882 774 901Q801 920 836 951Q870 982 889 1014Q907 1047 920 1091Q933 1135 933 1185Z"/></svg>
<div class="b" style="left:924.75px;top:383.60px;width:25.00px;height:17.50px;background:#383e45;border-radius:2px;border-top:1px solid #4d565e;border-left:1px solid #4d565e;box-shadow:1.5px 1.5px 1px rgba(0,0,0,.55);"></div>
<svg class="i" style="left:928.90px;top:387.30px" width="9.40" height="9.40" viewBox="0 0 512 512" preserveAspectRatio="none"><path fill="#fff" fill-rule="evenodd" d="M84 0 H340 L428 86 V192 H364 V110 H312 V64 H148 V192 H84Z M64 192 H448 Q512 192 512 256 V400 Q512 416 496 416 H428 V340 H84 V416 H16 Q0 416 0 400 V256 Q0 192 64 192Z M432 248 a24 24 0 1 0 .1 0Z M84 340 H428 V496 Q428 512 412 512 H100 Q84 512 84 496Z M148 396 V452 H364 V396Z"/></svg>
<svg class="i" style="left:942.25px;top:390.70px" width="3.8" height="2" viewBox="0 0 10 5"><path d="M0 0 H10 L5 5Z" fill="#fff"/></svg>
<div class="b" style="left:953.00px;top:383.60px;width:24.00px;height:17.50px;background:#383e45;border-radius:2px;border-top:1px solid #4d565e;border-left:1px solid #4d565e;box-shadow:1.5px 1.5px 1px rgba(0,0,0,.55);"></div>
<svg class="i" style="left:956.75px;top:388.60px;" width="9.30" height="7.00" viewBox="0 0 1792 1408" preserveAspectRatio="none"><path fill="#fff" d="M1792 454V1248Q1792 1314 1745 1361Q1698 1408 1632 1408H160Q94 1408 47 1361Q0 1314 0 1248V454Q44 503 101 541Q463 787 598 886Q655 928 690 952Q726 975 785 1000Q844 1024 895 1024H896H897Q948 1024 1007 1000Q1066 975 1102 952Q1137 928 1194 886Q1364 763 1692 541Q1749 502 1792 454ZM1792 160Q1792 239 1743 311Q1694 383 1621 434Q1245 695 1153 759Q1143 766 1110 790Q1078 813 1056 828Q1035 842 1004 860Q974 878 947 887Q920 896 897 896H896H895Q872 896 845 887Q818 878 788 860Q757 842 736 828Q714 813 682 790Q649 766 639 759Q548 695 377 576Q206 458 172 434Q110 392 55 318Q0 245 0 182Q0 104 42 52Q83 0 160 0H1632Q1697 0 1744 47Q1792 94 1792 160Z"/></svg>
<svg class="i" style="left:969.75px;top:390.70px" width="3.8" height="2" viewBox="0 0 10 5"><path d="M0 0 H10 L5 5Z" fill="#fff"/></svg>
<div class="b" style="left:980.75px;top:383.60px;width:14.25px;height:17.50px;background:#00bc8c;border-radius:2px;"></div>
<svg class="i" style="left:983.90px;top:388.00px;" width="8.20" height="8.20" viewBox="0 0 1536 1548" preserveAspectRatio="none"><path fill="#d9fff3" d="M1172 949Q1174 954 1174 964Q1174 997 1157 1040Q1141 1079 1086 1106Q1031 1132 984 1132Q927 1132 794 1070Q696 1025 624 952Q552 879 476 767Q404 660 405 573V565Q408 474 479 407Q503 385 531 385Q537 385 549 386Q561 388 568 388Q587 388 594 394Q602 401 610 422Q618 442 643 510Q668 578 668 585Q668 606 634 642Q599 679 599 689Q599 696 604 704Q638 777 706 841Q762 894 857 942Q869 949 879 949Q894 949 933 900Q972 852 985 852Q998 852 1082 896Q1167 940 1172 949ZM782 1382Q909 1382 1026 1332Q1142 1282 1226 1198Q1310 1114 1360 998Q1410 881 1410 754Q1410 627 1360 510Q1310 394 1226 310Q1142 226 1026 176Q909 126 782 126Q655 126 538 176Q422 226 338 310Q254 394 204 510Q154 627 154 754Q154 957 274 1122L195 1355L437 1278Q595 1382 782 1382ZM782 1508Q587 1508 417 1414L0 1548L136 1143Q28 965 28 754Q28 601 88 462Q148 322 249 221Q350 120 490 60Q629 0 782 0Q935 0 1074 60Q1214 120 1315 221Q1416 322 1476 462Q1536 601 1536 754Q1536 907 1476 1046Q1416 1186 1315 1287Q1214 1388 1074 1448Q935 1508 782 1508Z"/></svg>
<div class="b" style="left:877.00px;top:403.35px;width:15.00px;height:16.75px;border:1px solid #50585f;border-radius:2px;"></div>
<svg class="i" style="left:881.00px;top:408.35px;" width="7.90" height="6.80" viewBox="0 0 1472 1558" preserveAspectRatio="none"><path fill="#fff" d="M1472 779Q1472 833 1435 870L784 1521Q745 1558 693 1558Q642 1558 603 1521L528 1446Q490 1408 490 1355Q490 1302 528 1264L821 971H117Q65 971 32 934Q0 896 0 843V715Q0 662 32 624Q65 587 117 587H821L528 293Q490 257 490 203Q490 149 528 113L603 38Q641 0 693 0Q746 0 784 38L1435 689Q1472 724 1472 779Z"/></svg>
<div class="b" style="left:894.50px;top:403.35px;width:14.50px;height:16.75px;background:#383e45;border-radius:2px;border-top:1px solid #4d565e;border-left:1px solid #4d565e;box-shadow:1.5px 1.5px 1px rgba(0,0,0,.55);"></div>
<svg class="i" style="left:901px;top:410.50px" width="3.8" height="2" viewBox="0 0 10 5"><path d="M0 0 H10 L5 5Z" fill="#fff"/></svg>
<div class="b" style="left:85.25px;top:437.20px;width:9.25px;height:9.00px;background:#2f343a;border:1.6px solid #1b1e22;border-radius:2.6px;"></div>
<span class="t" style="top:432.20px;font-size:10.4px;line-height:13.52px;left:104.73px;">9</span>
<span class="t" style="top:432.20px;font-size:10.4px;line-height:13.52px;left:158.48px;transform:scaleX(1.0266);">3531</span>
<span class="t" style="top:432.20px;font-size:10.4px;line-height:13.52px;left:211.48px;transform:scaleX(1.0142);">A Rela S/A Industria e Comercio</span>
<span class="t" style="top:432.20px;font-size:10.4px;line-height:13.52px;left:480.73px;transform:scaleX(1.0050);">50116185001225</span>
<span class="t" style="top:432.20px;font-size:10.4px;line-height:13.52px;left:567.48px;transform:scaleX(0.9661);">07 DDL</span>
<span class="t" style="top:432.20px;font-size:10.4px;line-height:13.52px;left:657.48px;transform:scaleX(1.0502);">Boleto Bancário</span>
<span class="t" style="top:432.20px;font-size:10.4px;line-height:13.52px;right:222.23px;transform-origin:100% 0;transform:scaleX(1.0957);">111,11</span>
<div class="b" style="left:808.3px;top:429.00px;width:57.3px;height:17.5px;background:#655dad;border-radius:2.2px 0 0 2.2px"></div>
<div class="b" style="left:808.3px;top:446.50px;width:7.5px;height:16.5px;background:#655dad;border-radius:0 2.2px 2.2px 0"></div>
<span class="t" style="top:432.20px;font-size:10.4px;line-height:13.52px;left:809.98px;transform:scaleX(1.0489);-webkit-text-stroke:.25px #fff;">Faturament</span>
<span class="t" style="top:449.00px;font-size:10.4px;line-height:13.52px;left:808.88px;-webkit-text-stroke:.25px #fff;">o</span>
<div class="b" style="left:877.00px;top:430.20px;width:16.00px;height:17.50px;background:#5c636a;border-radius:2px;"></div>
<svg class="i" style="left:881.40px;top:433.90px;" width="9.40" height="9.40" viewBox="0 0 1792 1792" preserveAspectRatio="none"><path fill="#fff" d="M1764 11Q1797 35 1791 75L1535 1611Q1530 1640 1503 1656Q1489 1664 1472 1664Q1461 1664 1448 1659L995 1474L753 1769Q735 1792 704 1792Q691 1792 682 1788Q663 1781 652 1764Q640 1748 640 1728V1379L1504 320L435 1245L40 1083Q3 1069 0 1028Q-2 988 32 969L1696 9Q1711 0 1728 0Q1748 0 1764 11Z"/></svg>
<div class="b" style="left:895.75px;top:430.20px;width:12.50px;height:17.50px;border:1px solid #50585f;border-radius:2px;"></div>
<svg class="i" style="left:899.2px;top:433.30px" width="6.3" height="10" viewBox="0 0 320 512"><path fill="#fff" d="M296 160H180.600l42.600-129.800C227.200 15 215.700 0 200 0H56C44 0 33.800 8.900 32.200 20.800l-32 240C-1.700 275.200 9.500 288 24 288h118.700L96.600 482.500c-3.600 15.200 8 29.500 23.300 29.500 8.400 0 16.400-4.400 20.800-12l176-304c9.300-15.900-2.200-36-20.700-36z"/></svg>
<div class="b" style="left:910.00px;top:430.20px;width:13.00px;height:17.50px;border:1px solid #50585f;border-radius:2px;"></div>
<svg class="i" style="left:913.90px;top:433.10px;" width="5.60" height="10.60" viewBox="0 0 933 1792" preserveAspectRatio="none"><path fill="#fff" d="M933 1185Q933 1338 834 1448Q734 1559 575 1585V1760Q575 1774 566 1783Q557 1792 543 1792H408Q395 1792 386 1782Q376 1773 376 1760V1585Q310 1576 249 1554Q187 1532 147 1510Q107 1487 73 1462Q39 1436 27 1424Q14 1412 9 1406Q-8 1385 7 1365L110 1230Q117 1220 133 1218Q148 1216 157 1227Q157 1227 159 1229Q272 1328 402 1354Q439 1362 476 1362Q557 1362 619 1319Q680 1276 680 1197Q680 1169 665 1144Q650 1119 632 1102Q613 1085 573 1064Q533 1044 507 1032Q481 1021 427 1000Q388 984 366 975Q343 966 304 948Q265 931 242 918Q218 904 185 882Q152 860 132 840Q111 819 88 790Q65 762 53 732Q40 703 32 666Q23 629 23 588Q23 450 121 346Q219 242 376 212V32Q376 19 386 10Q395 0 408 0H543Q557 0 566 9Q575 18 575 32V208Q632 214 686 231Q739 248 773 264Q806 281 836 302Q866 323 875 331Q884 339 890 345Q907 363 895 383L814 529Q806 544 791 545Q777 548 764 538Q761 535 750 526Q738 517 711 500Q683 482 652 468Q621 453 578 442Q534 430 492 430Q397 430 337 473Q277 516 277 584Q277 610 286 632Q294 654 315 674Q336 693 355 706Q373 720 411 738Q448 755 471 764Q494 774 541 792Q594 812 622 824Q650 835 698 858Q746 882 774 901Q801 920 836 951Q870 982 889 1014Q907 1047 920 1091Q933 1135 933 1185Z"/></svg>
<div class="b" style="left:924.75px;top:430.20px;width:25.00px;height:17.50px;background:#383e45;border-radius:2px;border-top:1px solid #4d565e;border-left:1px solid #4d565e;box-shadow:1.5px 1.5px 1px rgba(0,0,0,.55);"></div>
<svg class="i" style="left:928.90px;top:433.90px" width="9.40" height="9.40" viewBox="0 0 512 512" preserveAspectRatio="none"><path fill="#fff" fill-rule="evenodd" d="M84 0 H340 L428 86 V192 H364 V110 H312 V64 H148 V192 H84Z M64 192 H448 Q512 192 512 256 V400 Q512 416 496 416 H428 V340 H84 V416 H16 Q0 416 0 400 V256 Q0 192 64 192Z M432 248 a24 24 0 1 0 .1 0Z M84 340 H428 V496 Q428 512 412 512 H100 Q84 512 84 496Z M148 396 V452 H364 V396Z"/></svg>
<svg class="i" style="left:942.25px;top:437.30px" width="3.8" height="2" viewBox="0 0 10 5"><path d="M0 0 H10 L5 5Z" fill="#fff"/></svg>
<div class="b" style="left:953.00px;top:430.20px;width:24.00px;height:17.50px;background:#383e45;border-radius:2px;border-top:1px solid #4d565e;border-left:1px solid #4d565e;box-shadow:1.5px 1.5px 1px rgba(0,0,0,.55);"></div>
<svg class="i" style="left:956.75px;top:435.20px;" width="9.30" height="7.00" viewBox="0 0 1792 1408" preserveAspectRatio="none"><path fill="#fff" d="M1792 454V1248Q1792 1314 1745 1361Q1698 1408 1632 1408H160Q94 1408 47 1361Q0 1314 0 1248V454Q44 503 101 541Q463 787 598 886Q655 928 690 952Q726 975 785 1000Q844 1024 895 1024H896H897Q948 1024 1007 1000Q1066 975 1102 952Q1137 928 1194 886Q1364 763 1692 541Q1749 502 1792 454ZM1792 160Q1792 239 1743 311Q1694 383 1621 434Q1245 695 1153 759Q1143 766 1110 790Q1078 813 1056 828Q1035 842 1004 860Q974 878 947 887Q920 896 897 896H896H895Q872 896 845 887Q818 878 788 860Q757 842 736 828Q714 813 682 790Q649 766 639 759Q548 695 377 576Q206 458 172 434Q110 392 55 318Q0 245 0 182Q0 104 42 52Q83 0 160 0H1632Q1697 0 1744 47Q1792 94 1792 160Z"/></svg>
<svg class="i" style="left:969.75px;top:437.30px" width="3.8" height="2" viewBox="0 0 10 5"><path d="M0 0 H10 L5 5Z" fill="#fff"/></svg>
<div class="b" style="left:980.75px;top:430.20px;width:14.25px;height:17.50px;background:#00bc8c;border-radius:2px;"></div>
<svg class="i" style="left:983.90px;top:434.60px;" width="8.20" height="8.20" viewBox="0 0 1536 1548" preserveAspectRatio="none"><path fill="#d9fff3" d="M1172 949Q1174 954 1174 964Q1174 997 1157 1040Q1141 1079 1086 1106Q1031 1132 984 1132Q927 1132 794 1070Q696 1025 624 952Q552 879 476 767Q404 660 405 573V565Q408 474 479 407Q503 385 531 385Q537 385 549 386Q561 388 568 388Q587 388 594 394Q602 401 610 422Q618 442 643 510Q668 578 668 585Q668 606 634 642Q599 679 599 689Q599 696 604 704Q638 777 706 841Q762 894 857 942Q869 949 879 949Q894 949 933 900Q972 852 985 852Q998 852 1082 896Q1167 940 1172 949ZM782 1382Q909 1382 1026 1332Q1142 1282 1226 1198Q1310 1114 1360 998Q1410 881 1410 754Q1410 627 1360 510Q1310 394 1226 310Q1142 226 1026 176Q909 126 782 126Q655 126 538 176Q422 226 338 310Q254 394 204 510Q154 627 154 754Q154 957 274 1122L195 1355L437 1278Q595 1382 782 1382ZM782 1508Q587 1508 417 1414L0 1548L136 1143Q28 965 28 754Q28 601 88 462Q148 322 249 221Q350 120 490 60Q629 0 782 0Q935 0 1074 60Q1214 120 1315 221Q1416 322 1476 462Q1536 601 1536 754Q1536 907 1476 1046Q1416 1186 1315 1287Q1214 1388 1074 1448Q935 1508 782 1508Z"/></svg>
<div class="b" style="left:877.00px;top:449.95px;width:15.00px;height:16.75px;border:1px solid #50585f;border-radius:2px;"></div>
<svg class="i" style="left:881.00px;top:454.95px;" width="7.90" height="6.80" viewBox="0 0 1472 1558" preserveAspectRatio="none"><path fill="#fff" d="M1472 779Q1472 833 1435 870L784 1521Q745 1558 693 1558Q642 1558 603 1521L528 1446Q490 1408 490 1355Q490 1302 528 1264L821 971H117Q65 971 32 934Q0 896 0 843V715Q0 662 32 624Q65 587 117 587H821L528 293Q490 257 490 203Q490 149 528 113L603 38Q641 0 693 0Q746 0 784 38L1435 689Q1472 724 1472 779Z"/></svg>
<div class="b" style="left:894.50px;top:449.95px;width:14.50px;height:16.75px;background:#383e45;border-radius:2px;border-top:1px solid #4d565e;border-left:1px solid #4d565e;box-shadow:1.5px 1.5px 1px rgba(0,0,0,.55);"></div>
<svg class="i" style="left:901px;top:457.10px" width="3.8" height="2" viewBox="0 0 10 5"><path d="M0 0 H10 L5 5Z" fill="#fff"/></svg>
<div class="b" style="left:85.25px;top:483.80px;width:9.25px;height:9.00px;background:#343a40;border:1.6px solid #1b1e22;border-radius:2.6px;"></div>
<span class="t" style="top:478.80px;font-size:10.4px;line-height:13.52px;left:104.73px;transform:scaleX(1.0759);">10</span>
<span class="t" style="top:478.80px;font-size:10.4px;line-height:13.52px;left:158.48px;transform:scaleX(1.0219);">63366</span>
<span class="t" style="top:478.80px;font-size:10.4px;line-height:13.52px;left:211.48px;transform:scaleX(0.9270);">AUTO VIAÇÃO CAMURUJIPE LTDA</span>
<span class="t" style="top:478.80px;font-size:10.4px;line-height:13.52px;left:480.73px;transform:scaleX(0.9955);">15890809000103</span>
<span class="t" style="top:478.80px;font-size:10.4px;line-height:13.52px;left:567.48px;transform:scaleX(0.9661);">07 DDL</span>
<span class="t" style="top:478.80px;font-size:10.4px;line-height:13.52px;left:657.48px;transform:scaleX(1.0502);">Boleto Bancário</span>
<span class="t" style="top:478.80px;font-size:10.4px;line-height:13.52px;right:222.23px;transform-origin:100% 0;transform:scaleX(1.0160);">500,00</span>
<div class="b" style="left:808.3px;top:475.60px;width:57.3px;height:17.5px;background:#655dad;border-radius:2.2px 0 0 2.2px"></div>
<div class="b" style="left:808.3px;top:493.10px;width:7.5px;height:16.5px;background:#655dad;border-radius:0 2.2px 2.2px 0"></div>
<span class="t" style="top:478.80px;font-size:10.4px;line-height:13.52px;left:809.98px;transform:scaleX(1.0489);-webkit-text-stroke:.25px #fff;">Faturament</span>
<span class="t" style="top:495.60px;font-size:10.4px;line-height:13.52px;left:808.88px;-webkit-text-stroke:.25px #fff;">o</span>
<div class="b" style="left:877.00px;top:476.80px;width:16.00px;height:17.50px;background:#5c636a;border-radius:2px;"></div>
<svg class="i" style="left:881.40px;top:480.50px;" width="9.40" height="9.40" viewBox="0 0 1792 1792" preserveAspectRatio="none"><path fill="#fff" d="M1764 11Q1797 35 1791 75L1535 1611Q1530 1640 1503 1656Q1489 1664 1472 1664Q1461 1664 1448 1659L995 1474L753 1769Q735 1792 704 1792Q691 1792 682 1788Q663 1781 652 1764Q640 1748 640 1728V1379L1504 320L435 1245L40 1083Q3 1069 0 1028Q-2 988 32 969L1696 9Q1711 0 1728 0Q1748 0 1764 11Z"/></svg>
<div class="b" style="left:895.75px;top:476.80px;width:12.50px;height:17.50px;border:1px solid #50585f;border-radius:2px;"></div>
<svg class="i" style="left:899.2px;top:479.90px" width="6.3" height="10" viewBox="0 0 320 512"><path fill="#fff" d="M296 160H180.600l42.600-129.800C227.200 15 215.700 0 200 0H56C44 0 33.800 8.900 32.200 20.800l-32 240C-1.700 275.200 9.500 288 24 288h118.700L96.600 482.500c-3.600 15.200 8 29.500 23.300 29.500 8.400 0 16.400-4.400 20.800-12l176-304c9.300-15.900-2.200-36-20.700-36z"/></svg>
<div class="b" style="left:910.00px;top:476.80px;width:13.00px;height:17.50px;border:1px solid #50585f;border-radius:2px;"></div>
<svg class="i" style="left:913.90px;top:479.70px;" width="5.60" height="10.60" viewBox="0 0 933 1792" preserveAspectRatio="none"><path fill="#fff" d="M933 1185Q933 1338 834 1448Q734 1559 575 1585V1760Q575 1774 566 1783Q557 1792 543 1792H408Q395 1792 386 1782Q376 1773 376 1760V1585Q310 1576 249 1554Q187 1532 147 1510Q107 1487 73 1462Q39 1436 27 1424Q14 1412 9 1406Q-8 1385 7 1365L110 1230Q117 1220 133 1218Q148 1216 157 1227Q157 1227 159 1229Q272 1328 402 1354Q439 1362 476 1362Q557 1362 619 1319Q680 1276 680 1197Q680 1169 665 1144Q650 1119 632 1102Q613 1085 573 1064Q533 1044 507 1032Q481 1021 427 1000Q388 984 366 975Q343 966 304 948Q265 931 242 918Q218 904 185 882Q152 860 132 840Q111 819 88 790Q65 762 53 732Q40 703 32 666Q23 629 23 588Q23 450 121 346Q219 242 376 212V32Q376 19 386 10Q395 0 408 0H543Q557 0 566 9Q575 18 575 32V208Q632 214 686 231Q739 248 773 264Q806 281 836 302Q866 323 875 331Q884 339 890 345Q907 363 895 383L814 529Q806 544 791 545Q777 548 764 538Q761 535 750 526Q738 517 711 500Q683 482 652 468Q621 453 578 442Q534 430 492 430Q397 430 337 473Q277 516 277 584Q277 610 286 632Q294 654 315 674Q336 693 355 706Q373 720 411 738Q448 755 471 764Q494 774 541 792Q594 812 622 824Q650 835 698 858Q746 882 774 901Q801 920 836 951Q870 982 889 1014Q907 1047 920 1091Q933 1135 933 1185Z"/></svg>
<div class="b" style="left:924.75px;top:476.80px;width:25.00px;height:17.50px;background:#383e45;border-radius:2px;border-top:1px solid #4d565e;border-left:1px solid #4d565e;box-shadow:1.5px 1.5px 1px rgba(0,0,0,.55);"></div>
<svg class="i" style="left:928.90px;top:480.50px" width="9.40" height="9.40" viewBox="0 0 512 512" preserveAspectRatio="none"><path fill="#fff" fill-rule="evenodd" d="M84 0 H340 L428 86 V192 H364 V110 H312 V64 H148 V192 H84Z M64 192 H448 Q512 192 512 256 V400 Q512 416 496 416 H428 V340 H84 V416 H16 Q0 416 0 400 V256 Q0 192 64 192Z M432 248 a24 24 0 1 0 .1 0Z M84 340 H428 V496 Q428 512 412 512 H100 Q84 512 84 496Z M148 396 V452 H364 V396Z"/></svg>
<svg class="i" style="left:942.25px;top:483.90px" width="3.8" height="2" viewBox="0 0 10 5"><path d="M0 0 H10 L5 5Z" fill="#fff"/></svg>
<div class="b" style="left:953.00px;top:476.80px;width:24.00px;height:17.50px;background:#383e45;border-radius:2px;border-top:1px solid #4d565e;border-left:1px solid #4d565e;box-shadow:1.5px 1.5px 1px rgba(0,0,0,.55);"></div>
<svg class="i" style="left:956.75px;top:481.80px;" width="9.30" height="7.00" viewBox="0 0 1792 1408" preserveAspectRatio="none"><path fill="#fff" d="M1792 454V1248Q1792 1314 1745 1361Q1698 1408 1632 1408H160Q94 1408 47 1361Q0 1314 0 1248V454Q44 503 101 541Q463 787 598 886Q655 928 690 952Q726 975 785 1000Q844 1024 895 1024H896H897Q948 1024 1007 1000Q1066 975 1102 952Q1137 928 1194 886Q1364 763 1692 541Q1749 502 1792 454ZM1792 160Q1792 239 1743 311Q1694 383 1621 434Q1245 695 1153 759Q1143 766 1110 790Q1078 813 1056 828Q1035 842 1004 860Q974 878 947 887Q920 896 897 896H896H895Q872 896 845 887Q818 878 788 860Q757 842 736 828Q714 813 682 790Q649 766 639 759Q548 695 377 576Q206 458 172 434Q110 392 55 318Q0 245 0 182Q0 104 42 52Q83 0 160 0H1632Q1697 0 1744 47Q1792 94 1792 160Z"/></svg>
<svg class="i" style="left:969.75px;top:483.90px" width="3.8" height="2" viewBox="0 0 10 5"><path d="M0 0 H10 L5 5Z" fill="#fff"/></svg>
<div class="b" style="left:980.75px;top:476.80px;width:14.25px;height:17.50px;background:#00bc8c;border-radius:2px;"></div>
<svg class="i" style="left:983.90px;top:481.20px;" width="8.20" height="8.20" viewBox="0 0 1536 1548" preserveAspectRatio="none"><path fill="#d9fff3" d="M1172 949Q1174 954 1174 964Q1174 997 1157 1040Q1141 1079 1086 1106Q1031 1132 984 1132Q927 1132 794 1070Q696 1025 624 952Q552 879 476 767Q404 660 405 573V565Q408 474 479 407Q503 385 531 385Q537 385 549 386Q561 388 568 388Q587 388 594 394Q602 401 610 422Q618 442 643 510Q668 578 668 585Q668 606 634 642Q599 679 599 689Q599 696 604 704Q638 777 706 841Q762 894 857 942Q869 949 879 949Q894 949 933 900Q972 852 985 852Q998 852 1082 896Q1167 940 1172 949ZM782 1382Q909 1382 1026 1332Q1142 1282 1226 1198Q1310 1114 1360 998Q1410 881 1410 754Q1410 627 1360 510Q1310 394 1226 310Q1142 226 1026 176Q909 126 782 126Q655 126 538 176Q422 226 338 310Q254 394 204 510Q154 627 154 754Q154 957 274 1122L195 1355L437 1278Q595 1382 782 1382ZM782 1508Q587 1508 417 1414L0 1548L136 1143Q28 965 28 754Q28 601 88 462Q148 322 249 221Q350 120 490 60Q629 0 782 0Q935 0 1074 60Q1214 120 1315 221Q1416 322 1476 462Q1536 601 1536 754Q1536 907 1476 1046Q1416 1186 1315 1287Q1214 1388 1074 1448Q935 1508 782 1508Z"/></svg>
<div class="b" style="left:877.00px;top:496.55px;width:15.00px;height:16.75px;border:1px solid #50585f;border-radius:2px;"></div>
<svg class="i" style="left:881.00px;top:501.55px;" width="7.90" height="6.80" viewBox="0 0 1472 1558" preserveAspectRatio="none"><path fill="#fff" d="M1472 779Q1472 833 1435 870L784 1521Q745 1558 693 1558Q642 1558 603 1521L528 1446Q490 1408 490 1355Q490 1302 528 1264L821 971H117Q65 971 32 934Q0 896 0 843V715Q0 662 32 624Q65 587 117 587H821L528 293Q490 257 490 203Q490 149 528 113L603 38Q641 0 693 0Q746 0 784 38L1435 689Q1472 724 1472 779Z"/></svg>
<div class="b" style="left:894.50px;top:496.55px;width:14.50px;height:16.75px;background:#383e45;border-radius:2px;border-top:1px solid #4d565e;border-left:1px solid #4d565e;box-shadow:1.5px 1.5px 1px rgba(0,0,0,.55);"></div>
<svg class="i" style="left:901px;top:503.70px" width="3.8" height="2" viewBox="0 0 10 5"><path d="M0 0 H10 L5 5Z" fill="#fff"/></svg>
<div class="b" style="left:85.25px;top:530.40px;width:9.25px;height:9.00px;background:#2f343a;border:1.6px solid #1b1e22;border-radius:2.6px;"></div>
<span class="t" style="top:525.40px;font-size:10.4px;line-height:13.52px;left:104.73px;transform:scaleX(1.1522);">11</span>
<span class="t" style="top:525.40px;font-size:10.4px;line-height:13.52px;left:158.48px;transform:scaleX(1.0266);">3531</span>
<span class="t" style="top:525.40px;font-size:10.4px;line-height:13.52px;left:211.48px;transform:scaleX(1.0142);">A Rela S/A Industria e Comercio</span>
<span class="t" style="top:525.40px;font-size:10.4px;line-height:13.52px;left:480.73px;transform:scaleX(1.0050);">50116185001225</span>
<span class="t" style="top:525.40px;font-size:10.4px;line-height:13.52px;left:567.48px;transform:scaleX(0.9661);">07 DDL</span>
<span class="t" style="top:525.40px;font-size:10.4px;line-height:13.52px;left:657.48px;transform:scaleX(1.0502);">Boleto Bancário</span>
<span class="t" style="top:525.40px;font-size:10.4px;line-height:13.52px;right:222.23px;transform-origin:100% 0;transform:scaleX(1.0160);">102,34</span>
<div class="b" style="left:808.3px;top:522.20px;width:57.3px;height:17.5px;background:#655dad;border-radius:2.2px 0 0 2.2px"></div>
<div class="b" style="left:808.3px;top:539.70px;width:7.5px;height:16.5px;background:#655dad;border-radius:0 2.2px 2.2px 0"></div>
<span class="t" style="top:525.40px;font-size:10.4px;line-height:13.52px;left:809.98px;transform:scaleX(1.0489);-webkit-text-stroke:.25px #fff;">Faturament</span>
<span class="t" style="top:542.20px;font-size:10.4px;line-height:13.52px;left:808.88px;-webkit-text-stroke:.25px #fff;">o</span>
<div class="b" style="left:877.00px;top:523.40px;width:16.00px;height:17.50px;background:#5c636a;border-radius:2px;"></div>
<svg class="i" style="left:881.40px;top:527.10px;" width="9.40" height="9.40" viewBox="0 0 1792 1792" preserveAspectRatio="none"><path fill="#fff" d="M1764 11Q1797 35 1791 75L1535 1611Q1530 1640 1503 1656Q1489 1664 1472 1664Q1461 1664 1448 1659L995 1474L753 1769Q735 1792 704 1792Q691 1792 682 1788Q663 1781 652 1764Q640 1748 640 1728V1379L1504 320L435 1245L40 1083Q3 1069 0 1028Q-2 988 32 969L1696 9Q1711 0 1728 0Q1748 0 1764 11Z"/></svg>
<div class="b" style="left:895.75px;top:523.40px;width:12.50px;height:17.50px;border:1px solid #50585f;border-radius:2px;"></div>
<svg class="i" style="left:899.2px;top:526.50px" width="6.3" height="10" viewBox="0 0 320 512"><path fill="#fff" d="M296 160H180.600l42.600-129.800C227.200 15 215.700 0 200 0H56C44 0 33.800 8.900 32.200 20.800l-32 240C-1.700 275.200 9.500 288 24 288h118.700L96.600 482.500c-3.600 15.200 8 29.500 23.300 29.500 8.400 0 16.400-4.400 20.800-12l176-304c9.300-15.900-2.200-36-20.700-36z"/></svg>
<div class="b" style="left:910.00px;top:523.40px;width:13.00px;height:17.50px;border:1px solid #50585f;border-radius:2px;"></div>
<svg class="i" style="left:913.90px;top:526.30px;" width="5.60" height="10.60" viewBox="0 0 933 1792" preserveAspectRatio="none"><path fill="#fff" d="M933 1185Q933 1338 834 1448Q734 1559 575 1585V1760Q575 1774 566 1783Q557 1792 543 1792H408Q395 1792 386 1782Q376 1773 376 1760V1585Q310 1576 249 1554Q187 1532 147 1510Q107 1487 73 1462Q39 1436 27 1424Q14 1412 9 1406Q-8 1385 7 1365L110 1230Q117 1220 133 1218Q148 1216 157 1227Q157 1227 159 1229Q272 1328 402 1354Q439 1362 476 1362Q557 1362 619 1319Q680 1276 680 1197Q680 1169 665 1144Q650 1119 632 1102Q613 1085 573 1064Q533 1044 507 1032Q481 1021 427 1000Q388 984 366 975Q343 966 304 948Q265 931 242 918Q218 904 185 882Q152 860 132 840Q111 819 88 790Q65 762 53 732Q40 703 32 666Q23 629 23 588Q23 450 121 346Q219 242 376 212V32Q376 19 386 10Q395 0 408 0H543Q557 0 566 9Q575 18 575 32V208Q632 214 686 231Q739 248 773 264Q806 281 836 302Q866 323 875 331Q884 339 890 345Q907 363 895 383L814 529Q806 544 791 545Q777 548 764 538Q761 535 750 526Q738 517 711 500Q683 482 652 468Q621 453 578 442Q534 430 492 430Q397 430 337 473Q277 516 277 584Q277 610 286 632Q294 654 315 674Q336 693 355 706Q373 720 411 738Q448 755 471 764Q494 774 541 792Q594 812 622 824Q650 835 698 858Q746 882 774 901Q801 920 836 951Q870 982 889 1014Q907 1047 920 1091Q933 1135 933 1185Z"/></svg>
<div class="b" style="left:924.75px;top:523.40px;width:25.00px;height:17.50px;background:#383e45;border-radius:2px;border-top:1px solid #4d565e;border-left:1px solid #4d565e;box-shadow:1.5px 1.5px 1px rgba(0,0,0,.55);"></div>
<svg class="i" style="left:928.90px;top:527.10px" width="9.40" height="9.40" viewBox="0 0 512 512" preserveAspectRatio="none"><path fill="#fff" fill-rule="evenodd" d="M84 0 H340 L428 86 V192 H364 V110 H312 V64 H148 V192 H84Z M64 192 H448 Q512 192 512 256 V400 Q512 416 496 416 H428 V340 H84 V416 H16 Q0 416 0 400 V256 Q0 192 64 192Z M432 248 a24 24 0 1 0 .1 0Z M84 340 H428 V496 Q428 512 412 512 H100 Q84 512 84 496Z M148 396 V452 H364 V396Z"/></svg>
<svg class="i" style="left:942.25px;top:530.50px" width="3.8" height="2" viewBox="0 0 10 5"><path d="M0 0 H10 L5 5Z" fill="#fff"/></svg>
<div class="b" style="left:953.00px;top:523.40px;width:24.00px;height:17.50px;background:#383e45;border-radius:2px;border-top:1px solid #4d565e;border-left:1px solid #4d565e;box-shadow:1.5px 1.5px 1px rgba(0,0,0,.55);"></div>
<svg class="i" style="left:956.75px;top:528.40px;" width="9.30" height="7.00" viewBox="0 0 1792 1408" preserveAspectRatio="none"><path fill="#fff" d="M1792 454V1248Q1792 1314 1745 1361Q1698 1408 1632 1408H160Q94 1408 47 1361Q0 1314 0 1248V454Q44 503 101 541Q463 787 598 886Q655 928 690 952Q726 975 785 1000Q844 1024 895 1024H896H897Q948 1024 1007 1000Q1066 975 1102 952Q1137 928 1194 886Q1364 763 1692 541Q1749 502 1792 454ZM1792 160Q1792 239 1743 311Q1694 383 1621 434Q1245 695 1153 759Q1143 766 1110 790Q1078 813 1056 828Q1035 842 1004 860Q974 878 947 887Q920 896 897 896H896H895Q872 896 845 887Q818 878 788 860Q757 842 736 828Q714 813 682 790Q649 766 639 759Q548 695 377 576Q206 458 172 434Q110 392 55 318Q0 245 0 182Q0 104 42 52Q83 0 160 0H1632Q1697 0 1744 47Q1792 94 1792 160Z"/></svg>
<svg class="i" style="left:969.75px;top:530.50px" width="3.8" height="2" viewBox="0 0 10 5"><path d="M0 0 H10 L5 5Z" fill="#fff"/></svg>
<div class="b" style="left:980.75px;top:523.40px;width:14.25px;height:17.50px;background:#00bc8c;border-radius:2px;"></div>
<svg class="i" style="left:983.90px;top:527.80px;" width="8.20" height="8.20" viewBox="0 0 1536 1548" preserveAspectRatio="none"><path fill="#d9fff3" d="M1172 949Q1174 954 1174 964Q1174 997 1157 1040Q1141 1079 1086 1106Q1031 1132 984 1132Q927 1132 794 1070Q696 1025 624 952Q552 879 476 767Q404 660 405 573V565Q408 474 479 407Q503 385 531 385Q537 385 549 386Q561 388 568 388Q587 388 594 394Q602 401 610 422Q618 442 643 510Q668 578 668 585Q668 606 634 642Q599 679 599 689Q599 696 604 704Q638 777 706 841Q762 894 857 942Q869 949 879 949Q894 949 933 900Q972 852 985 852Q998 852 1082 896Q1167 940 1172 949ZM782 1382Q909 1382 1026 1332Q1142 1282 1226 1198Q1310 1114 1360 998Q1410 881 1410 754Q1410 627 1360 510Q1310 394 1226 310Q1142 226 1026 176Q909 126 782 126Q655 126 538 176Q422 226 338 310Q254 394 204 510Q154 627 154 754Q154 957 274 1122L195 1355L437 1278Q595 1382 782 1382ZM782 1508Q587 1508 417 1414L0 1548L136 1143Q28 965 28 754Q28 601 88 462Q148 322 249 221Q350 120 490 60Q629 0 782 0Q935 0 1074 60Q1214 120 1315 221Q1416 322 1476 462Q1536 601 1536 754Q1536 907 1476 1046Q1416 1186 1315 1287Q1214 1388 1074 1448Q935 1508 782 1508Z"/></svg>
<div class="b" style="left:877.00px;top:543.15px;width:15.00px;height:16.75px;border:1px solid #50585f;border-radius:2px;"></div>
<svg class="i" style="left:881.00px;top:548.15px;" width="7.90" height="6.80" viewBox="0 0 1472 1558" preserveAspectRatio="none"><path fill="#fff" d="M1472 779Q1472 833 1435 870L784 1521Q745 1558 693 1558Q642 1558 603 1521L528 1446Q490 1408 490 1355Q490 1302 528 1264L821 971H117Q65 971 32 934Q0 896 0 843V715Q0 662 32 624Q65 587 117 587H821L528 293Q490 257 490 203Q490 149 528 113L603 38Q641 0 693 0Q746 0 784 38L1435 689Q1472 724 1472 779Z"/></svg>
<div class="b" style="left:894.50px;top:543.15px;width:14.50px;height:16.75px;background:#383e45;border-radius:2px;border-top:1px solid #4d565e;border-left:1px solid #4d565e;box-shadow:1.5px 1.5px 1px rgba(0,0,0,.55);"></div>
<svg class="i" style="left:901px;top:550.30px" width="3.8" height="2" viewBox="0 0 10 5"><path d="M0 0 H10 L5 5Z" fill="#fff"/></svg>
</body></html>
